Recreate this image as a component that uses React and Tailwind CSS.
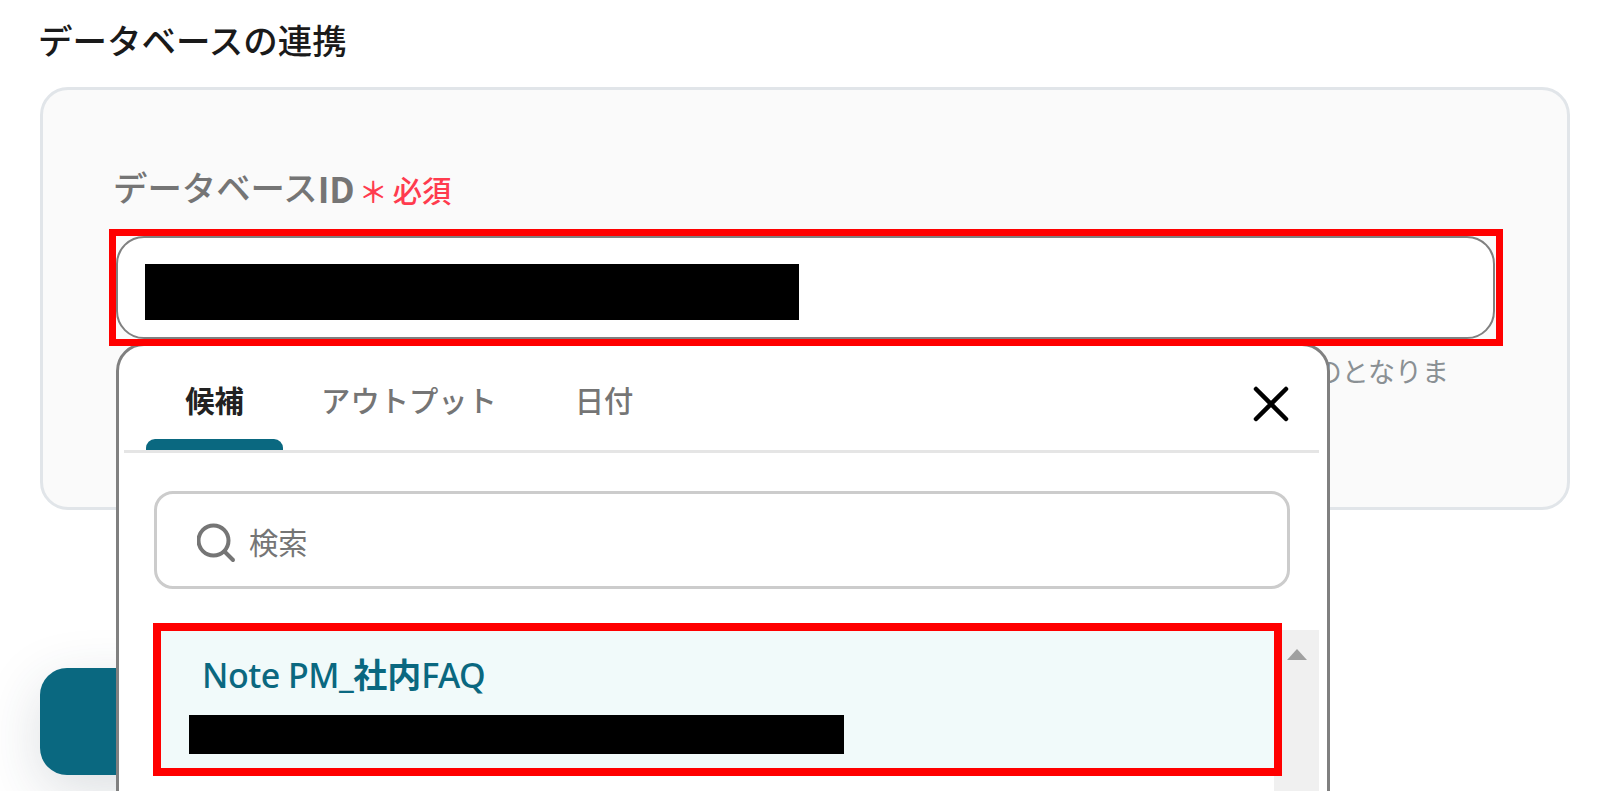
import React, { useState } from "react";

const tabs = [
  { id: "candidates", label: "候補", width: "w-[137px]" },
  { id: "outputs", label: "アウトプット", width: "w-[252px]" },
  { id: "date", label: "日付", width: "w-[138px]" },
];

const SearchIcon = () => (
  <svg className="h-10 w-10 shrink-0" viewBox="0 0 40 40" fill="none" stroke="#757575" strokeWidth="4" strokeLinecap="round">
    <circle cx="16.5" cy="17.5" r="15" />
    <path d="M27.5 28.5L36 37" />
  </svg>
);

const CloseIcon = () => (
  <svg className="h-9 w-9" viewBox="0 0 36 36" fill="none" stroke="#000" strokeWidth="4.5" strokeLinecap="round">
    <path d="M3 3L33 33M33 3L3 33" />
  </svg>
);

const TabBar = ({ active, onChange }) => (
  <div className="mr-[8px] ml-[5px] flex h-[107px] border-b-[3px] border-[#e5e5e5] pl-[22px]">
    {tabs.map((tab) => (
      <button
        key={tab.id}
        type="button"
        onClick={() => onChange(tab.id)}
        className={`${tab.width} flex flex-col items-center justify-end text-[29.3px] leading-[40px] ${
          active === tab.id ? "font-bold text-[#222]" : "font-medium text-[#757575]"
        }`}
      >
        <span className="mb-[18px] whitespace-nowrap">{tab.label}</span>
        <span className={`h-[11px] w-full rounded-t-[9px] ${active === tab.id ? "bg-[#0a6880]" : ""}`} />
      </button>
    ))}
    <button type="button" aria-label="close" className="mr-[30px] ml-auto mt-[40px] h-9">
      <CloseIcon />
    </button>
  </div>
);

const SuggestionPopup = () => {
  const [active, setActive] = useState("candidates");

  return (
    <div className="absolute top-[107px] left-0 h-[560px] w-[1214px] rounded-[28px] border-[3px] border-[#808080] bg-white">
      <TabBar active={active} onChange={setActive} />

      <div className="mt-[38px] ml-[35px] flex h-[98px] w-[1136px] items-center gap-[12px] rounded-[19px] border-[3px] border-[#ccc] pt-[5px] pl-[40px]">
        <SearchIcon />
        <span className="text-[29.3px] leading-[40px] text-[#757575]">検索</span>
      </div>

      <div className="mt-[34px] ml-[34px] flex">
        <div className="z-10 h-[153px] w-[1129px] shrink-0 border-8 border-[#f00] bg-[#f1fafa] pt-[20px] pl-[41px]">
          <p className="text-[34px] font-medium leading-[48px] tracking-[-0.5px] text-[#0a6880]">
            Note PM_<span className="font-bold tracking-normal">社内</span>FAQ
          </p>
          <div className="mt-[16px] -ml-[13px] h-[39px] w-[655px] bg-black" />
        </div>
        <div className="mt-[7px] -ml-[8px] flex h-[300px] w-[45px] justify-center bg-[#f0f0f0] pt-[19px]">
          <svg className="h-[11px] w-[20px]" viewBox="0 0 20 11">
            <path d="M10 0L20 11H0Z" fill="#a0a0a0" />
          </svg>
        </div>
      </div>
    </div>
  );
};

const DatabaseField = () => (
  <div>
    <label className="-ml-[3px] flex h-[52px] items-center text-[34.4px] font-medium text-[#757575]">
      データベース
      <span className="font-['Noto_Sans_CJK_JP',sans-serif] text-[35.5px] font-bold">ID</span>
      <span className="ml-[4px] pt-[7px] text-[29px] text-[#ff3b4e]">＊</span>
      <span className="ml-[5px] pt-[7px] text-[29.3px] text-[#ff3b4e]">必須</span>
    </label>

    <div className="relative z-10 mt-[15px] -ml-[7px] h-[117px] w-[1394px]">
      <div className="absolute top-[7px] left-[7px] h-[103px] w-[1379px]">
        <div className="h-full rounded-[28px] border-2 border-[#808080] bg-white pt-[26px] pl-[27px]">
          <div className="h-[56px] w-[654px] bg-black" />
        </div>
        <SuggestionPopup />
      </div>
      <div className="pointer-events-none absolute inset-0 border-7 border-[#f00]" />
    </div>

    <p className="mt-[6px] mr-[118px] text-right text-[27px] leading-[40px] text-[#8a9094]">のとなりま</p>
  </div>
);

const App = () => {
  return (
    <main className="h-[791px] w-[1600px] overflow-hidden bg-white font-['Noto_Sans','Noto_Sans_CJK_JP',sans-serif]">
      <h2 className="pt-[16px] pl-[38px] text-[34.5px] font-medium leading-[50px] text-[#1a1a1a]">データベースの連携</h2>

      <section className="mt-[21px] ml-[40px] h-[423px] w-[1530px] rounded-[28px] border-[3px] border-[#e1e5e9] bg-[#fafafa] pt-[72px] pl-[73px]">
        <DatabaseField />
      </section>

      <button
        type="button"
        className="mt-[158px] ml-[40px] block h-[107px] w-[300px] rounded-[27px] bg-[#0a6880] shadow-[0_16px_56px_rgba(40,60,75,0.17)]"
      />
    </main>
  );
};

export default App;
